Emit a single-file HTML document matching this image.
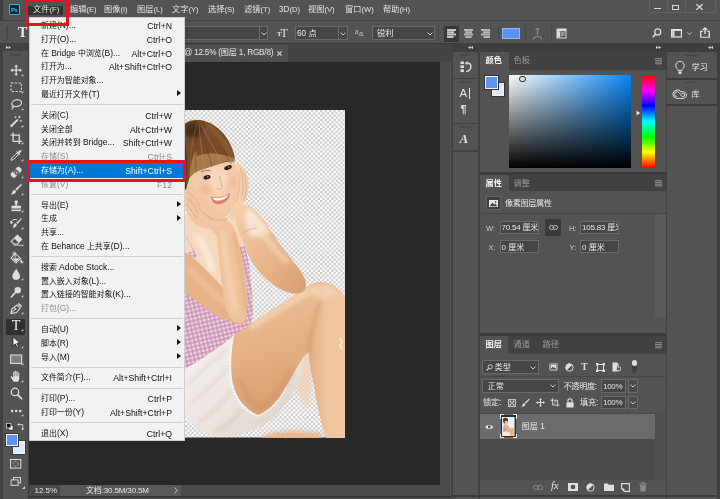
<!DOCTYPE html>
<html lang="zh-CN">
<head>
<meta charset="utf-8">
<title>Photoshop</title>
<style>
html,body{margin:0;padding:0;}
html{background:#535353;}
body{width:720px;height:499px;overflow:hidden;position:relative;background:#535353;will-change:transform;-webkit-font-smoothing:antialiased;
 font-family:"Liberation Sans","Noto Sans CJK SC",sans-serif;font-size:9px;color:#e4e4e4;line-height:1;}
div,span,svg{position:absolute;box-sizing:border-box;}
.t{white-space:nowrap;}
#menubar{left:0;top:0;width:720px;height:20px;background:#535353;}
#menubar .m{top:5.8px;font-size:8.2px;color:#e6e6e6;white-space:nowrap;}
#optbar{left:0;top:20px;width:720px;height:23px;background:#535353;border-top:1px solid #424242;}
.dd{background:#454545;border:1px solid #686868;height:15px;top:5px;}
#toolbar{left:0;top:44px;width:29px;height:455px;background:#535353;border-left:3px solid #404040;border-right:1.5px solid #3c3c3c;}
#toolhead{left:0;top:-1px;width:24.5px;height:8.3px;background:#424242;}
#tabbar{left:29px;top:43px;width:424px;height:19px;background:#444;border-top:1px solid #383838;}
#canvas{left:29px;top:62px;width:411px;height:423px;background:#282828;overflow:hidden;}
#vscroll{left:440px;top:62px;width:10px;height:434px;background:#4a4a4a;}
#hscroll{left:181px;top:485px;width:259px;height:11px;background:#4a4a4a;}
#menu{left:29px;top:17px;width:156px;height:424px;background:#f2f2f2;border:1px solid #cfcfcf;color:#111;font-size:7.95px;}
#menu .i{left:11px;white-space:nowrap;height:12px;line-height:12px;}
#menu .s{right:12px;font-size:8.7px;white-space:nowrap;height:12px;line-height:12px;text-align:right;}
#menu .sep{left:1px;width:152px;height:1px;background:#d0d0d0;}
#menu .dis{color:#8c8c8c;}
#menu .ar{right:3px;width:0;height:0;border-left:4px solid #111;border-top:3px solid transparent;border-bottom:3px solid transparent;}
span.ml{position:static;font-size:7.7px;line-height:1px;}
span.l{position:static;font-size:8.5px;line-height:1px;}
.pt{margin-top:0.7px;font-size:8.2px;white-space:nowrap;color:#e8e8e8;}
.dim{color:#9a9a9a;}
.ic{overflow:visible;}
</style>
</head>
<body>
<div id="menubar">
  <div style="left:0;top:0;width:2.5px;height:499px;background:#3e3e3e;"></div>
  <div style="left:9.3px;top:4.4px;width:10.4px;height:10.2px;background:#0b2837;border:1px solid #2fb9e8;border-radius:1px;"></div>
  <div class="t" style="left:10.9px;top:6.6px;font-size:6px;color:#31c5f4;font-weight:bold;letter-spacing:-0.3px;">Ps</div>
  <div style="left:27px;top:6.2px;width:36.4px;height:9.3px;background:#333;"></div>
  <div class="m" style="left:33px;">文件<span class="ml">(F)</span></div>
  <div class="m" style="left:70px;">编辑<span class="ml">(E)</span></div>
  <div class="m" style="left:104px;">图像<span class="ml">(I)</span></div>
  <div class="m" style="left:137px;">图层<span class="ml">(L)</span></div>
  <div class="m" style="left:172px;">文字<span class="ml">(Y)</span></div>
  <div class="m" style="left:208px;">选择<span class="ml">(S)</span></div>
  <div class="m" style="left:244px;">滤镜<span class="ml">(T)</span></div>
  <div class="m" style="left:279px;">3D<span class="ml">(D)</span></div>
  <div class="m" style="left:308px;">视图<span class="ml">(V)</span></div>
  <div class="m" style="left:345px;">窗口<span class="ml">(W)</span></div>
  <div class="m" style="left:383px;">帮助<span class="ml">(H)</span></div>
  <!-- window controls -->
  <div style="left:648.5px;top:-1px;width:67.5px;height:13.5px;border:1px solid #616161;border-radius:0 0 2px 2px;"></div>
  <div style="left:666.5px;top:0;width:1px;height:12px;background:#616161;"></div>
  <div style="left:684.5px;top:0;width:1px;height:12px;background:#616161;"></div>
  <div style="left:654px;top:7.8px;width:6.5px;height:1.6px;background:#d8d8d8;"></div>
  <div style="left:672px;top:4.8px;width:7px;height:5px;border:1.2px solid #d8d8d8;border-top-width:1.8px;"></div>
  <svg class="ic" style="left:696.3px;top:3.8px;" width="7" height="6" viewBox="0 0 7 6"><path d="M0.4 0.2L6.6 5.8M6.6 0.2L0.4 5.8" stroke="#dcdcdc" stroke-width="1.3" fill="none"/></svg>
</div>
<div id="optbar">
  <!-- T tool indicator -->
  <div class="t" style="left:18px;top:5px;font-family:'Liberation Serif',serif;font-size:14px;font-weight:bold;color:#ececec;">T</div>
  <div style="left:5.8px;top:4.5px;width:1.8px;height:13px;background:#474747;"></div>
  <!-- font family/style dropdown (mostly hidden by menu) -->
  <div class="dd" style="left:60px;width:208px;top:5px;height:13.5px;"></div>
  <div style="left:259px;top:6px;width:1px;height:11.5px;background:#686868;"></div>
  <svg class="ic" style="left:261px;top:11px;" width="6" height="4" viewBox="0 0 6 4"><path d="M0.5 0.5 L3 3 L5.5 0.5" stroke="#d0d0d0" stroke-width="1" fill="none"/></svg>
  <!-- tT icon -->
  <div class="t" style="left:277px;top:9.5px;font-family:'Liberation Serif',serif;font-size:7px;color:#e0e0e0;font-weight:bold;">T</div>
  <div class="t" style="left:280.5px;top:5.5px;font-family:'Liberation Serif',serif;font-size:12px;color:#e0e0e0;">T</div>
  <!-- size dropdown -->
  <div class="dd" style="left:295px;width:53px;top:5px;height:13.5px;"></div>
  <div style="left:338px;top:6px;width:1px;height:11.5px;background:#686868;"></div>
  <div class="t" style="left:297px;top:8.6px;font-size:8.2px;color:#eee;">60 点</div>
  <svg class="ic" style="left:340px;top:11px;" width="6" height="4" viewBox="0 0 6 4"><path d="M0.5 0.5 L3 3 L5.5 0.5" stroke="#d0d0d0" stroke-width="1" fill="none"/></svg>
  <!-- aa icon -->
  <div class="t" style="left:355px;top:7.5px;font-size:6.5px;color:#c8c8c8;">a</div>
  <div class="t" style="left:359px;top:9px;font-size:7.5px;color:#c8c8c8;">a</div>
  <!-- anti-alias dropdown -->
  <div class="dd" style="left:372px;width:63px;top:5px;height:13.5px;"></div>
  <div class="t" style="left:377px;top:8.6px;font-size:8.2px;color:#eee;">锐利</div>
  <svg class="ic" style="left:427px;top:11px;" width="6" height="4" viewBox="0 0 6 4"><path d="M0.5 0.5 L3 3 L5.5 0.5" stroke="#d0d0d0" stroke-width="1" fill="none"/></svg>
  <div style="left:438px;top:5px;width:1px;height:16px;background:#474747;"></div>
  <!-- align buttons -->
  <div style="left:444px;top:4.5px;width:15px;height:16px;background:#383838;"></div>
  <svg class="ic" style="left:446.5px;top:8px;" width="9" height="9" viewBox="0 0 9 9"><path d="M0 0h9v2h-9z M0 2.3h7v2h-7z M0 4.6h9v2h-9z M0 6.9h6.5v2.1h-6.5z" fill="#c4c4c4"/></svg>
  <svg class="ic" style="left:464px;top:8px;" width="9" height="9" viewBox="0 0 9 9"><path d="M0 0h9v2h-9z M1 2.3h7v2h-7z M0 4.6h9v2h-9z M1.3 6.9h6.4v2.1h-6.4z" fill="#b4b4b4"/></svg>
  <svg class="ic" style="left:481px;top:8px;" width="9" height="9" viewBox="0 0 9 9"><path d="M0 0h9v2h-9z M2 2.3h7v2h-7z M0 4.6h9v2h-9z M2.5 6.9h6.5v2.1h-6.5z" fill="#b4b4b4"/></svg>
  <div style="left:498px;top:5px;width:1px;height:16px;background:#474747;"></div>
  <!-- colour swatch -->
  <div style="left:502px;top:6.5px;width:18px;height:11.5px;background:#5a94ef;border:1px solid #8fb6f5;"></div>
  <div style="left:525px;top:5px;width:1px;height:16px;background:#474747;"></div>
  <!-- warp text -->
  <svg class="ic" style="left:532px;top:7px;" width="11" height="12" viewBox="0 0 11 12"><path d="M3.5 1h4M5.5 1v6" stroke="#8c8c8c" stroke-width="1.3" fill="none"/><path d="M0.8 11 Q5.5 5.5 10.2 11" stroke="#8c8c8c" stroke-width="1.2" fill="none"/></svg>
  <div style="left:551px;top:5px;width:1px;height:16px;background:#474747;"></div>
  <!-- panel toggle -->
  <svg class="ic" style="left:556px;top:7px;" width="11" height="11" viewBox="0 0 11 11"><path d="M0.5 0.5h10v10h-10z" fill="#dcdcdc"/><path d="M2 3.2h7.5v6.3h-7.5z" fill="#535353"/><path d="M2 3.2h2.3v6.3h-2.3z M5 4.5h3.5v1h-3.5z M5 6.5h3.5v1h-3.5z" fill="#dcdcdc"/></svg>
  <!-- search -->
  <svg class="ic" style="left:651.5px;top:7px;" width="10" height="10" viewBox="0 0 11 11"><circle cx="6.3" cy="4.3" r="3.3" stroke="#e0e0e0" stroke-width="1.4" fill="none"/><path d="M3.9 6.8L0.8 10" stroke="#e0e0e0" stroke-width="1.7" fill="none"/></svg>
  <!-- workspace -->
  <svg class="ic" style="left:670.5px;top:7.6px;" width="11" height="8.6" viewBox="0 0 13 10" preserveAspectRatio="none"><rect x="0.7" y="0.7" width="11.6" height="8.6" stroke="#e0e0e0" stroke-width="1.4" fill="none"/><rect x="1.5" y="2.2" width="2.6" height="6.5" fill="#e0e0e0"/><rect x="1.5" y="1" width="10" height="1.3" fill="#e0e0e0"/></svg>
  <svg class="ic" style="left:687.4px;top:11px;" width="5" height="3.4" viewBox="0 0 6 4"><path d="M0.5 0.5L3 3L5.5 0.5" stroke="#d0d0d0" stroke-width="1.1" fill="none"/></svg>
  <!-- share -->
  <svg class="ic" style="left:700px;top:6px;" width="10" height="11" viewBox="0 0 11 14" preserveAspectRatio="none"><path d="M3 5.5H0.8V13h9.4V5.5H8" stroke="#e0e0e0" stroke-width="1.5" fill="none"/><path d="M5.5 9V1.2M3 3.8L5.5 1.2L8 3.8" stroke="#e0e0e0" stroke-width="1.5" fill="none"/></svg>
</div>
<!-- dark band under options bar -->
<div style="left:0;top:43px;width:720px;height:9px;background:#3e3e3e;"></div>
<div id="tabbar">
  <div style="left:0;top:0.5px;width:259px;height:17.5px;background:#505050;"></div>
  <div class="t" style="left:155px;top:5px;font-size:8.2px;letter-spacing:-0.22px;color:#e6e6e6;">@ 12.5% (图层 1, RGB/8)</div>
  <svg class="ic" style="left:247.5px;top:7px;" width="5" height="5" viewBox="0 0 5 5"><path d="M0.3 0.3L4.7 4.7M4.7 0.3L0.3 4.7" stroke="#d8d8d8" stroke-width="1.1"/></svg>
</div>
<div id="toolbar">
<div id="toolhead"></div>
<svg class="ic" style="left:3px;top:2.2px;" width="5" height="3" viewBox="0 0 5 3"><path d="M0 0V3L2.4 1.5ZM2.6 0V3L5 1.5Z" fill="#e0e0e0"/></svg>
<div style="left:6.5px;top:10px;width:12px;height:1.6px;background:#494949;"></div>
<div style="left:2.8px;top:275px;width:19.5px;height:15.5px;background:#2f2f2f;border-radius:1px;"></div>
<svg class="ic" style="left:6.5px;top:20.4px;" width="12.4" height="12.4" viewBox="0 0 14 14"><path d="M7 0.5L9.2 3H7.7V6.3H11V4.8L13.5 7L11 9.2V7.7H7.7V11H9.2L7 13.5L4.8 11H6.3V7.7H3V9.2L0.5 7L3 4.8V6.3H6.3V3H4.8Z" fill="#dedede"/></svg>
<svg class="ic" style="left:17.8px;top:30.2px;" width="2.3" height="2.3" viewBox="0 0 3 3"><path d="M3 0V3H0Z" fill="#cfcfcf"/></svg>
<svg class="ic" style="left:6.5px;top:37.4px;" width="12.4" height="12.4" viewBox="0 0 14 14"><rect x="1.2" y="2.2" width="11.6" height="9.6" fill="none" stroke="#dedede" stroke-width="1.2" stroke-dasharray="2.6 1.6"/></svg>
<svg class="ic" style="left:17.8px;top:47.2px;" width="2.3" height="2.3" viewBox="0 0 3 3"><path d="M3 0V3H0Z" fill="#cfcfcf"/></svg>
<svg class="ic" style="left:6.5px;top:54.4px;" width="12.4" height="12.4" viewBox="0 0 14 14"><ellipse cx="7.5" cy="5.8" rx="5.6" ry="3.8" fill="none" stroke="#dedede" stroke-width="1.3" transform="rotate(-12 7.5 5.8)"/><path d="M3.2 8.6C1.8 9.6 2.2 11.2 3.6 11C4.8 10.8 4.4 9.2 3.4 9.4M3.4 11C3 12 2.4 12.8 1.6 13.4" fill="none" stroke="#dedede" stroke-width="1.1"/></svg>
<svg class="ic" style="left:17.8px;top:64.2px;" width="2.3" height="2.3" viewBox="0 0 3 3"><path d="M3 0V3H0Z" fill="#cfcfcf"/></svg>
<svg class="ic" style="left:6.5px;top:71.4px;" width="12.4" height="12.4" viewBox="0 0 14 14"><path d="M1.5 12.5L8.2 5.8" stroke="#dedede" stroke-width="2.2" stroke-linecap="round"/><path d="M10.5 0.8v3M9 2.3h3M12.3 5.5v2.4M11.1 6.7h2.4M6.2 1.6v2M5.2 2.6h2" stroke="#dedede" stroke-width="0.9"/></svg>
<svg class="ic" style="left:17.8px;top:81.2px;" width="2.3" height="2.3" viewBox="0 0 3 3"><path d="M3 0V3H0Z" fill="#cfcfcf"/></svg>
<svg class="ic" style="left:6.5px;top:88.4px;" width="12.4" height="12.4" viewBox="0 0 14 14"><path d="M3.5 0.5V10.5H13.5M0.5 3.5H10.5V13.5" fill="none" stroke="#dedede" stroke-width="1.5"/></svg>
<svg class="ic" style="left:17.8px;top:98.2px;" width="2.3" height="2.3" viewBox="0 0 3 3"><path d="M3 0V3H0Z" fill="#cfcfcf"/></svg>
<svg class="ic" style="left:6.5px;top:105.4px;" width="12.4" height="12.4" viewBox="0 0 14 14"><path d="M1.2 12.8L2 10.2L7.4 4.8L9.2 6.6L3.8 12Z" fill="none" stroke="#dedede" stroke-width="1.1"/><path d="M7 3.4L10.6 7L11.6 6L10.6 5L12.6 3C13.4 2.2 12.8 0.6 11.4 1.2L9 3.4L8 2.4Z" fill="#dedede"/></svg>
<svg class="ic" style="left:17.8px;top:115.2px;" width="2.3" height="2.3" viewBox="0 0 3 3"><path d="M3 0V3H0Z" fill="#cfcfcf"/></svg>
<svg class="ic" style="left:6.5px;top:122.4px;" width="12.4" height="12.4" viewBox="0 0 14 14"><g transform="rotate(-45 7 7)"><rect x="0" y="3.6" width="14" height="6.8" rx="3.2" fill="#dedede"/><rect x="4.6" y="3.6" width="4.8" height="6.8" fill="#535353"/><circle cx="6" cy="5.6" r="0.6" fill="#dedede"/><circle cx="8" cy="5.6" r="0.6" fill="#dedede"/><circle cx="6" cy="8.4" r="0.6" fill="#dedede"/><circle cx="8" cy="8.4" r="0.6" fill="#dedede"/><circle cx="7" cy="7" r="0.6" fill="#dedede"/></g></svg>
<svg class="ic" style="left:17.8px;top:132.2px;" width="2.3" height="2.3" viewBox="0 0 3 3"><path d="M3 0V3H0Z" fill="#cfcfcf"/></svg>
<svg class="ic" style="left:6.5px;top:139.4px;" width="12.4" height="12.4" viewBox="0 0 14 14"><path d="M12.8 0.8C13.6 1.2 13.4 2 12.8 2.8L7.6 8.6L5.8 7Z" fill="#dedede"/><path d="M5 7.8L6.8 9.4C6.6 11.6 4.6 13.2 1 12.8C2.6 11.8 2.6 10.6 3 9.4C3.4 8.4 4.2 7.8 5 7.8Z" fill="#dedede"/></svg>
<svg class="ic" style="left:17.8px;top:149.2px;" width="2.3" height="2.3" viewBox="0 0 3 3"><path d="M3 0V3H0Z" fill="#cfcfcf"/></svg>
<svg class="ic" style="left:6.5px;top:156.4px;" width="12.4" height="12.4" viewBox="0 0 14 14"><path d="M5 1.6C5 0.2 9 0.2 9 1.6C9 3 8 3.8 8 5.2V6.6H12.4V9.6H1.6V6.6H6V5.2C6 3.8 5 3 5 1.6Z" fill="#dedede"/><rect x="1.6" y="10.8" width="10.8" height="1.8" fill="#dedede"/></svg>
<svg class="ic" style="left:17.8px;top:166.2px;" width="2.3" height="2.3" viewBox="0 0 3 3"><path d="M3 0V3H0Z" fill="#cfcfcf"/></svg>
<svg class="ic" style="left:6.5px;top:173.4px;" width="12.4" height="12.4" viewBox="0 0 14 14"><path d="M13 1C13.6 1.4 13.4 2.2 12.8 2.8L8.6 7.8L7 6.4Z" fill="#dedede"/><path d="M6.2 7.2L7.8 8.6C7.6 10.6 5.8 12.4 2.4 12.2C3.8 11.2 3.8 10.2 4.2 9C4.6 8 5.4 7.2 6.2 7.2Z" fill="#dedede"/><path d="M1 7.4A4.6 4.6 0 0 1 8 3.4" fill="none" stroke="#dedede" stroke-width="1.1"/><path d="M0 4.2L1 7.8L4 6.2Z" fill="#dedede"/></svg>
<svg class="ic" style="left:17.8px;top:183.2px;" width="2.3" height="2.3" viewBox="0 0 3 3"><path d="M3 0V3H0Z" fill="#cfcfcf"/></svg>
<svg class="ic" style="left:6.5px;top:190.4px;" width="12.4" height="12.4" viewBox="0 0 14 14"><path d="M8.2 1.4L13.2 6L8.4 11.2H4.4L1.4 8.4Z" fill="none" stroke="#dedede" stroke-width="1.2"/><path d="M8.2 1.4L13.2 6L9.8 9.6L4.8 5Z" fill="#dedede"/><path d="M4 12.6H13" stroke="#dedede" stroke-width="1"/></svg>
<svg class="ic" style="left:17.8px;top:200.2px;" width="2.3" height="2.3" viewBox="0 0 3 3"><path d="M3 0V3H0Z" fill="#cfcfcf"/></svg>
<svg class="ic" style="left:6.5px;top:207.4px;" width="12.4" height="12.4" viewBox="0 0 14 14"><g transform="translate(0,1)"><path d="M5.8 1.6L12 7.4L6.8 12.6L1.2 7.2Z" fill="none" stroke="#dedede" stroke-width="1.2"/><path d="M2.6 7.2H10.8L6.8 11.4Z" fill="#dedede"/><path d="M5.8 6.4V1C5.8 -0.4 3.6 -0.4 3.6 1.4V4" fill="none" stroke="#dedede" stroke-width="1"/><path d="M12.6 8.4C13.6 10 14 10.8 13.6 11.8C13.2 12.8 11.8 12.6 11.6 11.6C11.4 10.6 12 9.6 12.6 8.4Z" fill="#dedede"/></g></svg>
<svg class="ic" style="left:17.8px;top:217.2px;" width="2.3" height="2.3" viewBox="0 0 3 3"><path d="M3 0V3H0Z" fill="#cfcfcf"/></svg>
<svg class="ic" style="left:6.5px;top:224.4px;" width="12.4" height="12.4" viewBox="0 0 14 14"><path d="M7 0.8C9 4 11.4 6.6 11.4 9.2C11.4 11.8 9.4 13.4 7 13.4C4.6 13.4 2.6 11.8 2.6 9.2C2.6 6.6 5 4 7 0.8Z" fill="#dedede"/></svg>
<svg class="ic" style="left:17.8px;top:234.2px;" width="2.3" height="2.3" viewBox="0 0 3 3"><path d="M3 0V3H0Z" fill="#cfcfcf"/></svg>
<svg class="ic" style="left:6.5px;top:241.4px;" width="12.4" height="12.4" viewBox="0 0 14 14"><g transform="translate(0,1)"><circle cx="8.8" cy="4.8" r="3.6" fill="#dedede"/><path d="M6 7.6L1.4 12.6" stroke="#dedede" stroke-width="1.8" stroke-linecap="round"/></g></svg>
<svg class="ic" style="left:17.8px;top:251.2px;" width="2.3" height="2.3" viewBox="0 0 3 3"><path d="M3 0V3H0Z" fill="#cfcfcf"/></svg>
<svg class="ic" style="left:6.5px;top:258.4px;" width="12.4" height="12.4" viewBox="0 0 14 14"><path d="M1 13L2.4 7.6L8 3.4L11.6 7L7 12Z" fill="none" stroke="#dedede" stroke-width="1.2" stroke-linejoin="round"/><path d="M1.2 12.8L5.6 8.4" stroke="#dedede" stroke-width="1"/><circle cx="6" cy="8" r="1.1" fill="#dedede"/><path d="M8.6 2.4L10 1L13.6 4.6L12.4 6Z" fill="#dedede"/></svg>
<svg class="ic" style="left:17.8px;top:268.2px;" width="2.3" height="2.3" viewBox="0 0 3 3"><path d="M3 0V3H0Z" fill="#cfcfcf"/></svg>
<svg class="ic" style="left:6.5px;top:275.4px;" width="12.4" height="12.4" viewBox="0 0 14 14"><text x="7" y="12.6" text-anchor="middle" font-family="Liberation Serif,serif" font-size="16" fill="#f4f4f4">T</text></svg>
<svg class="ic" style="left:17.8px;top:285.2px;" width="2.3" height="2.3" viewBox="0 0 3 3"><path d="M3 0V3H0Z" fill="#cfcfcf"/></svg>
<svg class="ic" style="left:6.5px;top:292.4px;" width="12.4" height="12.4" viewBox="0 0 14 14"><path d="M3.4 0.8V11.4L6 8.8L7.8 13L9.6 12.2L7.8 8.2H11.4Z" fill="#f4f4f4" stroke="#1e1e1e" stroke-width="0.9" stroke-linejoin="round"/></svg>
<svg class="ic" style="left:17.8px;top:302.2px;" width="2.3" height="2.3" viewBox="0 0 3 3"><path d="M3 0V3H0Z" fill="#cfcfcf"/></svg>
<svg class="ic" style="left:6.5px;top:309.4px;" width="12.4" height="12.4" viewBox="0 0 14 14"><rect x="0.8" y="2.2" width="12.4" height="9.6" fill="#7d7d7d" stroke="#dedede" stroke-width="1.2"/></svg>
<svg class="ic" style="left:17.8px;top:319.2px;" width="2.3" height="2.3" viewBox="0 0 3 3"><path d="M3 0V3H0Z" fill="#cfcfcf"/></svg>
<svg class="ic" style="left:6.5px;top:326.4px;" width="12.4" height="12.4" viewBox="0 0 14 14"><path d="M4.2 13.4C3.4 11.6 1.6 9.8 0.8 8.2C0.4 7.2 1.6 6.6 2.4 7.4L3.6 8.8V2.8C3.6 1.8 5 1.8 5.2 2.8V1.6C5.4 0.6 6.8 0.6 7 1.6V2.2C7.2 1.2 8.6 1.2 8.8 2.2V3.4C9 2.4 10.4 2.6 10.4 3.6V9.6C10.4 11.2 9.8 12.2 9.2 13.4Z" fill="#dedede"/><path d="M5.2 3V7M7 2.4V7M8.8 3V7" stroke="#535353" stroke-width="0.6"/></svg>
<svg class="ic" style="left:17.8px;top:336.2px;" width="2.3" height="2.3" viewBox="0 0 3 3"><path d="M3 0V3H0Z" fill="#cfcfcf"/></svg>
<svg class="ic" style="left:6.5px;top:343.4px;" width="12.4" height="12.4" viewBox="0 0 14 14"><circle cx="5.6" cy="5.6" r="4.2" fill="none" stroke="#dedede" stroke-width="1.4"/><path d="M8.8 8.8L13 13" stroke="#dedede" stroke-width="2" stroke-linecap="round"/></svg>
<svg class="ic" style="left:6.5px;top:360.4px;" width="12.4" height="12.4" viewBox="0 0 14 14"><circle cx="2.4" cy="8" r="1.5" fill="#dedede"/><circle cx="7" cy="8" r="1.5" fill="#dedede"/><circle cx="11.6" cy="8" r="1.5" fill="#dedede"/></svg>
<svg class="ic" style="left:17.8px;top:370.2px;" width="2.3" height="2.3" viewBox="0 0 3 3"><path d="M3 0V3H0Z" fill="#cfcfcf"/></svg>
<svg class="ic" style="left:3px;top:378.8px;" width="7.4" height="7.4" viewBox="0 0 9 9"><rect x="3" y="3" width="5.5" height="5.5" fill="#f0f0f0" stroke="#222" stroke-width="0.6"/><rect x="0.5" y="0.5" width="5.5" height="5.5" fill="#111" stroke="#eee" stroke-width="0.8"/></svg>
<svg class="ic" style="left:13.8px;top:378.6px;" width="7.8" height="7.8" viewBox="0 0 9 9"><path d="M2 1.8H6.6V7" fill="none" stroke="#dedede" stroke-width="1"/><path d="M0.2 1.8L2.6 0V3.6Z M6.6 8.8L4.8 6.4H8.4Z" fill="#dedede"/></svg>
<div style="left:9.5px;top:397px;width:12.5px;height:12.5px;background:#dce9f8;border:1px solid #f4f4f4;outline:0.5px solid #3a3a3a;"></div>
<div style="left:2.8px;top:389.5px;width:12.7px;height:12.7px;background:#5b95f0;border:1px solid #f4f4f4;outline:0.6px solid #3a3a3a;"></div>
<svg class="ic" style="left:7.2px;top:414.6px;" width="11.4" height="9.6" viewBox="0 0 13 11"><rect x="0.6" y="0.6" width="11.8" height="9.8" fill="none" stroke="#dedede" stroke-width="1.2"/><circle cx="6.5" cy="5.5" r="2.8" fill="none" stroke="#dedede" stroke-width="0.9" stroke-dasharray="1.2 0.8"/></svg>
<svg class="ic" style="left:6.8px;top:432.8px;" width="11.6" height="9.6" viewBox="0 0 13 12"><rect x="3.6" y="0.6" width="8.8" height="6.8" fill="#535353" stroke="#dedede" stroke-width="1.2"/><rect x="0.6" y="3.6" width="8.8" height="6.8" fill="#535353" stroke="#dedede" stroke-width="1.2"/></svg>
<svg class="ic" style="left:19px;top:442px;" width="3" height="3" viewBox="0 0 3 3"><path d="M3 0V3H0Z" fill="#cfcfcf"/></svg>
</div>
<div id="canvas">
<svg style="left:156px;top:48px;" width="160" height="327.5" viewBox="185 110 160 327.5" preserveAspectRatio="none">
<defs>
  <pattern id="chk" x="185" y="110" width="4.5" height="4.5" patternUnits="userSpaceOnUse"><rect width="4.5" height="4.5" fill="#ffffff"/><rect width="2.25" height="2.25" fill="#cccccc"/><rect x="2.25" y="2.25" width="2.25" height="2.25" fill="#cccccc"/></pattern>
  <pattern id="ging" width="4.2" height="4.2" patternUnits="userSpaceOnUse" patternTransform="rotate(-14)"><rect width="4.2" height="4.2" fill="#f4e4ec"/><rect width="2.1" height="4.2" fill="#d395b8" opacity="0.7"/><rect width="4.2" height="2.1" fill="#c47aa6" opacity="0.55"/></pattern>
  <linearGradient id="skinA" x1="0" y1="0" x2="1" y2="1"><stop offset="0" stop-color="#f4cfae"/><stop offset="0.6" stop-color="#e7b287"/><stop offset="1" stop-color="#d79d70"/></linearGradient>
  <linearGradient id="thigh" x1="0.3" y1="0" x2="0.5" y2="1"><stop offset="0" stop-color="#edc098"/><stop offset="0.5" stop-color="#e2ad80"/><stop offset="1" stop-color="#d2976a"/></linearGradient>
  <linearGradient id="shin" x1="0" y1="0" x2="1" y2="0"><stop offset="0" stop-color="#e3ae83"/><stop offset="0.5" stop-color="#eec49d"/><stop offset="1" stop-color="#f1c9a3"/></linearGradient>
  <linearGradient id="hair" x1="0" y1="0" x2="1" y2="1"><stop offset="0" stop-color="#6b3d1c"/><stop offset="0.5" stop-color="#8a5830"/><stop offset="1" stop-color="#6a3c1d"/></linearGradient>
  <linearGradient id="shorts" x1="0" y1="0" x2="1" y2="1"><stop offset="0" stop-color="#f6f2f0"/><stop offset="0.5" stop-color="#ece5e1"/><stop offset="1" stop-color="#d9cec8"/></linearGradient>
  <filter id="b1" x="-10%" y="-10%" width="120%" height="120%"><feGaussianBlur stdDeviation="0.6"/></filter>
  <filter id="b2" x="-20%" y="-20%" width="140%" height="140%"><feGaussianBlur stdDeviation="2"/></filter>
  <clipPath id="imgclip"><rect x="185" y="110" width="160" height="327.5"/></clipPath>
</defs>
<rect x="185" y="110" width="160" height="327.5" fill="url(#chk)"/>
<g clip-path="url(#imgclip)" filter="url(#b1)">
<!-- far leg glimpses (blurred) -->
<g filter="url(#b2)">
<path d="M297 358C303 352 312 350 312 360C312 380 311 395 308 408C302 408 297 392 296 378Z" fill="#f0d3bd" opacity="0.85"/>
<path d="M262 437C270 431 290 429 322 433L322 440H262Z" fill="#e8b58f"/>
</g>
<!-- neck and chest -->
<path d="M185 214C195 222 215 228 236 216L246 252C240 275 225 292 205 296L185 292Z" fill="#f6d8bf"/>
<path d="M196 236C204 244 210 258 212 272" stroke="#fdeee2" stroke-width="6" fill="none" opacity="0.8" filter="url(#b2)"/>
<!-- top (pink gingham) -->
<path d="M244 246C248 254 251 275 252.500 300C253.500 315 252 326 250 329L236 338L185 376L185 290C200 300 222 312 236 320C232 300 228 270 234 248Z" fill="url(#ging)"/>
<path d="M244 246C248 254 251 275 252.500 300C253.500 315 252 326 250 329L236 338L185 376L185 290C200 300 222 312 236 320C232 300 228 270 234 248Z" fill="#b98aa8" opacity="0.12"/>
<!-- strap -->
<path d="M186 236L194.500 252" stroke="#d9b3d2" stroke-width="1" fill="none"/><path d="M185 254L194 251L198 257L185 263Z" fill="url(#ging)"/>
<!-- shorts -->
<path d="M185 369C200 360 222 346 234 335C231 352 230 370 233 384C236 398 246 410 258 415C266 412 277 404 285 389C290 378 295 368 298 362L304 356C302 372 296 392 286 404C276 418 262 428 250 431C238 437 214 439 200 430C194 426 188 420 185 416Z" fill="url(#shorts)"/>
<path d="M188 384C198 374 212 362 226 350M190 404C202 394 216 382 228 368M198 422C210 416 222 404 232 390M214 432C224 428 234 420 242 410" stroke="#b9aaa3" stroke-width="1.600" fill="none" opacity="0.6" filter="url(#b2)"/>
<path d="M234 336C230 352 229 372 232 386C236 400 246 412 258 416C268 412 278 403 286 388" stroke="#fbf8f6" stroke-width="2.400" fill="none" stroke-dasharray="2.200 1.200"/>
<!-- thigh + knee + shin -->
<path d="M234 335C250 324 272 310 296 294C304 288 312 282 320 282C332 282 341 289 345 297L345 438L326 438C321 422 317 404 314 384C311 372 309 362 309 352C306 354 305 355 304 356C296 368 290 380 284 390C276 404 266 412 258 415C246 410 236 398 233 384C230 370 231 352 234 335Z" fill="url(#thigh)"/>
<path d="M320 284C332 283 341 289 345 297L345 438L326 438C321 422 317 404 314 384C311 372 309 362 309 352C310 340 314 320 320 304Z" fill="url(#shin)"/>
<path d="M320 302C314 320 310 338 309 354" stroke="#c58a5e" stroke-width="2.500" fill="none" opacity="0.55" filter="url(#b2)"/>
<path d="M250 328C270 314 292 300 316 288" stroke="#f8dcc2" stroke-width="7" fill="none" opacity="0.65" filter="url(#b2)"/>
<path d="M240 380C246 396 254 406 262 408C272 402 282 388 292 370" stroke="#cd8f62" stroke-width="6" fill="none" opacity="0.45" filter="url(#b2)"/>
<!-- knee highlight -->
<ellipse cx="324" cy="292" rx="13" ry="7" fill="#f6d6b8" opacity="0.7" filter="url(#b2)"/>
<path d="M340 338L342 342L340 346L342 349" stroke="#fff" stroke-width="1.500" fill="none" opacity="0.7"/>
<!-- right forearm (viewer right) -->
<path d="M236 214C239 206 246 203 252 207C260 213 268 226 277 240C288 256 299 267 304 277C308 285 306 292 298 293.500C288 295 274 287 262 275C253 266 247 254 244 244C240 234 234 224 236 214Z" fill="url(#skinA)"/>
<path d="M246 208C254 210 262 220 270 232C264 236 256 238 250 236C246 228 244 218 246 208Z" fill="#fbe9da" opacity="0.9" filter="url(#b2)"/>
<path d="M254 222C264 236 274 250 288 262" stroke="#f8dcc2" stroke-width="5" fill="none" opacity="0.7" filter="url(#b2)"/>
<path d="M243 233C248 230 253 228 257 228" stroke="#cf9468" stroke-width="0.7" fill="none" opacity="0.8"/>
<!-- left upper arm -->
<path d="M185 253C192 256 200 264 208 272C214 278 220 284 226 292L246 318C246 324 240 326 232 322C218 318 200 304 185 292Z" fill="#e6b186"/>
<path d="M188 268C198 278 212 292 226 304" stroke="#f0c6a0" stroke-width="6" fill="none" opacity="0.7" filter="url(#b2)"/>
<!-- left forearm -->
<path d="M205 222C212 218 228 218 233 226C238 238 243 258 246 280C248 296 248.500 312 244 321C238 326 230 322 226 308C222 290 219 262 217 236Z" fill="#efc39c"/>
<path d="M222 232C225 252 229 284 236 312" stroke="#f8d9bd" stroke-width="5" fill="none" opacity="0.75" filter="url(#b2)"/>
<path d="M234 232C239 254 244 284 246 312" stroke="#cf9669" stroke-width="2.500" fill="none" opacity="0.6" filter="url(#b2)"/>
<!-- face -->
<path d="M188 176C196 164 222 156 234 160C240 170 243 186 239 200C235 212 226 219 216 219C204 218 192 206 188 192Z" fill="#f3caa8"/>
<path d="M206 170C214 166 224 166 228 172C228 182 226 190 220 196C214 192 208 182 206 170Z" fill="#f9dcc4" opacity="0.8" filter="url(#b2)"/>
<!-- cheek blush -->
<ellipse cx="205" cy="190" rx="6" ry="4.5" fill="#eeaa90" opacity="0.55" filter="url(#b2)"/>
<ellipse cx="234" cy="182" rx="4" ry="5" fill="#eeaa90" opacity="0.5" filter="url(#b2)"/>
<!-- nose shadow -->
<path d="M219 176C221 182 223 186 221 189C219 190 217 189 216 188" stroke="#d89c78" stroke-width="1" fill="none" opacity="0.7"/>
<!-- right hand (viewer right) -->
<path d="M234.5 164C239 163 244 168 247 175C250 183 249 192 246 199C243 207 239 213 234 219C229 221 228 216 231 210C235 204 238 196 238 188C238 178 236 170 234.5 164Z" fill="#f4cfae"/>
<path d="M238 172C240 180 240 192 236 202" stroke="#dca27c" stroke-width="0.8" fill="none" opacity="0.7"/>
<!-- left hand -->
<path d="M186 187C190 184 197 189 201 195C207 204 216 213 228 218C226 226 214 230 204 228C195 226 188 218 186 210C185 202 185 194 186 187Z" fill="#f2c6a3"/>
<path d="M189 198C195 204 203 214 212 220" stroke="#d99c76" stroke-width="0.8" fill="none" opacity="0.7"/>
<g fill="none" stroke="#d39a74" stroke-width="0.7" opacity="0.8" stroke-linecap="round">
<path d="M240 168C243 176 244 186 242 196"/><path d="M243.500 172C247 180 247 190 244 200"/>
<path d="M187.500 192C192 194 197 200 200 206"/><path d="M186.500 198C191 201 195 207 198 213"/><path d="M187 205C191 209 194 214 197 219"/>
<path d="M205 214C212 220 220 222 228 219"/>
</g>
<!-- hair -->
<path d="M185 123.500C189 120.500 195 119.500 199 120C206 120.500 213 124 219 129C226 135 231 144 234 154C235 158 234.600 160 234 162C229 161 224 162 219 164C213 166 205 168 198 171C194 173 191 175 189.500 178C188 182 187 186 186 190L185 190Z" fill="#774b28"/>
<ellipse cx="193" cy="130" rx="9" ry="8" fill="#3a2618" opacity="0.8" filter="url(#b2)"/>
<path d="M185 140C187 150 187 170 186 188L185 188Z" fill="#4a2e1a" opacity="0.8" filter="url(#b1)"/>
<!-- bangs (lighter) -->
<path d="M197 156C207 152 222 153 233 158C234.500 159 234.600 160 234 162C229 161 224 162 219 164C213 166 205 168 198 171C194 173 191 175 189.500 178C190 168 192 158 196 150Z" fill="#b88a5a" opacity="0.75" filter="url(#b1)"/>
<path d="M206 126C216 132 226 144 231 158" stroke="#a87a4a" stroke-width="3" fill="none" opacity="0.6" filter="url(#b2)"/>
<g fill="none" stroke-linecap="round" opacity="0.55">
<path d="M200 123C206 134 214 148 222 163" stroke="#c09466" stroke-width="0.8"/>
<path d="M200 124C204 138 208 152 212 166" stroke="#5b381e" stroke-width="0.8"/>
<path d="M199 124C200 140 202 154 204 168" stroke="#bd9060" stroke-width="0.8"/>
<path d="M198 124C196 140 195 156 196 171" stroke="#5b381e" stroke-width="0.8"/>
<path d="M197 124C192 138 190 156 190 176" stroke="#ab7e52" stroke-width="0.8"/>
<path d="M202 123C212 130 222 144 229 161" stroke="#5b381e" stroke-width="0.8"/>
<path d="M206 123C218 130 228 142 233 158" stroke="#9a6c42" stroke-width="0.9"/>
</g>
<!-- eyebrows -->
<path d="M201 172C204 170 208 170 211 171" stroke="#8a5a36" stroke-width="0.9" fill="none" opacity="0.8"/>
<path d="M222 163C225 161 229 161 232 163" stroke="#8a5a36" stroke-width="0.9" fill="none" opacity="0.8"/>
<!-- eyes -->
<ellipse cx="207" cy="177.300" rx="3.600" ry="2" fill="#2e1c12" transform="rotate(-14 207 177.3)"/>
<ellipse cx="228" cy="167.600" rx="4" ry="2.100" fill="#2e1c12" transform="rotate(-22 228 167.6)"/>
<circle cx="207.800" cy="176.800" r="0.600" fill="#fff"/><circle cx="228.800" cy="167" r="0.600" fill="#fff"/>
<!-- mouth -->
<path d="M211 196.500C217 198.500 225 197 230 193C230 200 223 205.500 216 204C213 203 211.500 200 211 196.500Z" fill="#dc7a70"/>
<path d="M212.600 197.400C218 199 224.500 197.600 228.600 194.600C227 199.500 219 202 214 200Z" fill="#fdf6f1"/>

</g>
</svg>
</div>
<div id="vscroll"></div>
<div id="hscroll"></div>
<!-- status bar -->
<div style="left:29px;top:485px;width:31px;height:11px;background:#4a4a4a;"></div>
<div style="left:60px;top:485px;width:121px;height:11px;background:#595959;"></div>
<div class="t" style="left:34.5px;top:486.5px;font-size:8px;color:#e8e8e8;">12.5%</div>
<div class="t" style="left:86px;top:486.5px;font-size:8px;letter-spacing:-0.15px;color:#e8e8e8;">文档:30.5M/30.5M</div>
<svg class="ic" style="left:174px;top:487px;" width="4" height="7" viewBox="0 0 4 7"><path d="M0.5 0.5L3.3 3.5L0.5 6.5" stroke="#cfcfcf" stroke-width="0.9" fill="none"/></svg>
<div style="left:29px;top:496px;width:423px;height:1.5px;background:#383838;"></div>
<div style="left:450.8px;top:62px;width:2.2px;height:437px;background:#414141;"></div>
<!-- ICON STRIP -->
<div style="left:453px;top:52px;width:24px;height:447px;background:#535353;"></div>
<svg class="ic" style="left:468.3px;top:46.2px;" width="5" height="3" viewBox="0 0 5 3"><path d="M2.4 0V3L0 1.5ZM5 0V3L2.6 1.5Z" fill="#e0e0e0"/></svg>
<div style="left:458.5px;top:54.2px;width:12.5px;height:1.6px;background:#494949;"></div>
<div style="left:452.5px;top:77.5px;width:25.5px;height:1.8px;background:#414141;"></div>
<div style="left:458.5px;top:81.2px;width:12.5px;height:1.6px;background:#494949;"></div>
<div style="left:452.5px;top:122.5px;width:25.5px;height:1.8px;background:#414141;"></div>
<div style="left:458.5px;top:126.2px;width:12.5px;height:1.6px;background:#494949;"></div>
<div style="left:452.5px;top:150px;width:25.5px;height:1.8px;background:#414141;"></div>
<!-- history icon -->
<svg class="ic" style="left:460px;top:61px;" width="12" height="12" viewBox="0 0 12 12"><rect x="0.5" y="0.5" width="3.4" height="2.6" fill="#dedede"/><rect x="0.5" y="4.4" width="3.4" height="2.6" fill="#dedede"/><rect x="0.5" y="8.3" width="3.4" height="2.8" fill="#dedede"/><path d="M6 2.2C9.6 1.4 11.4 3.6 10.8 6.4C10.4 8.6 8.6 10.2 6.2 10.6" fill="none" stroke="#dedede" stroke-width="1.4"/><path d="M4.8 2.2L7.4 0.2V4.2Z" fill="#dedede"/></svg>
<!-- A| -->
<div class="t" style="left:459.5px;top:88px;font-size:11.5px;color:#e4e4e4;">A</div>
<div style="left:468.6px;top:88px;width:1px;height:11px;background:#e4e4e4;"></div>
<!-- pilcrow -->
<div class="t" style="left:460.5px;top:104px;font-size:11px;font-weight:bold;color:#e4e4e4;">¶</div>
<!-- glyphs A -->
<div class="t" style="left:459.5px;top:131.5px;font-family:'Liberation Serif',serif;font-style:italic;font-weight:bold;font-size:13px;color:#e4e4e4;">A</div>

<!-- MAIN PANELS column -->
<div style="left:478px;top:43px;width:1.5px;height:456px;background:#414141;"></div>
<div style="left:665.5px;top:52px;width:1.7px;height:447px;background:#414141;"></div>
<svg class="ic" style="left:656.3px;top:46.2px;" width="5" height="3" viewBox="0 0 5 3"><path d="M0 0V3L2.4 1.5ZM2.6 0V3L5 1.5Z" fill="#e0e0e0"/></svg>
<!-- Colour panel -->
<div style="left:479.5px;top:52px;width:186px;height:17.5px;background:#424242;"></div>
<div style="left:479.5px;top:52px;width:29px;height:17.5px;background:#535353;"></div>
<div class="pt" style="left:485.5px;top:56.5px;font-weight:bold;color:#f4f4f4;">颜色</div>
<div class="pt dim" style="left:513.5px;top:56.5px;">色板</div>
<svg class="ic" style="left:655px;top:58px;" width="7" height="6" viewBox="0 0 7 6"><path d="M0 0.6H7M0 2.4H7M0 4.2H7M0 5.8H7" stroke="#a2a2a2" stroke-width="0.8"/></svg>
<!-- fg/bg -->
<div style="left:491.8px;top:83.2px;width:12.5px;height:12.5px;background:#dce9f8;border:1px solid #f4f4f4;outline:0.5px solid #333;"></div>
<div style="left:485.2px;top:76.4px;width:12.5px;height:12.5px;background:#5b95f0;border:1px solid #f4f4f4;outline:0.6px solid #333;"></div>
<!-- colour field -->
<div style="left:508.5px;top:74.5px;width:122.5px;height:93px;background:linear-gradient(to bottom,rgba(0,0,0,0),#000),linear-gradient(to right,#fff,#0887f6);"></div>
<div style="left:519px;top:75.5px;width:6.5px;height:6.5px;border:1px solid #222;border-radius:50%;box-shadow:inset 0 0 0 0.6px #eee;"></div>
<!-- hue strip -->
<div style="left:642px;top:74.5px;width:12.5px;height:93px;background:linear-gradient(to bottom,#ff0000 0%,#ff00ff 17%,#0000ff 33%,#00ffff 50%,#00ff00 67%,#ffff00 83%,#ff0000 100%);"></div>
<svg class="ic" style="left:636px;top:110px;" width="5" height="6" viewBox="0 0 5 6"><path d="M0.3 0.3L4.6 3L0.3 5.7Z" fill="#f2f2f2" stroke="#333" stroke-width="0.4"/></svg>
<!-- divider -->
<div style="left:479.5px;top:172px;width:186px;height:3px;background:#3a3a3a;"></div>
<!-- Properties panel -->
<div style="left:479.5px;top:175px;width:186px;height:16px;background:#424242;"></div>
<div style="left:479.5px;top:175px;width:29px;height:16px;background:#535353;"></div>
<div class="pt" style="left:485.5px;top:179px;font-weight:bold;color:#f4f4f4;">属性</div>
<div class="pt dim" style="left:513.5px;top:179px;">调整</div>
<svg class="ic" style="left:655px;top:180px;" width="7" height="6" viewBox="0 0 7 6"><path d="M0 0.6H7M0 2.4H7M0 4.2H7M0 5.8H7" stroke="#a2a2a2" stroke-width="0.8"/></svg>
<div style="left:486px;top:196px;width:14.5px;height:14px;background:#3f3f3f;border:1px solid #646464;"></div>
<svg class="ic" style="left:489px;top:199.5px;" width="9" height="7" viewBox="0 0 9 7"><rect x="0" y="0" width="9" height="7" fill="#e6e6e6"/><path d="M0.8 6.2L3.4 2.6L5.2 4.8L6.4 3.6L8.2 6.2Z" fill="#3f3f3f"/><circle cx="6.6" cy="1.9" r="0.8" fill="#3f3f3f"/></svg>
<div class="pt" style="left:505px;top:199.5px;letter-spacing:-0.45px;">像素图层属性</div>
<div style="left:479.5px;top:213px;width:186px;height:1px;background:#464646;"></div>
<div style="left:655px;top:214px;width:10.5px;height:103px;background:#5a5a5a;"></div>
<!-- W/H/X/Y -->
<div class="pt" style="left:486px;top:224px;font-size:7.6px;color:#cfcfcf;">W:</div>
<div style="left:499.5px;top:220.5px;width:39.5px;height:13.5px;background:#454545;border:1px solid #6a6a6a;"></div>
<div class="pt" style="left:501.5px;top:223.5px;font-size:8px;letter-spacing:-0.2px;">70.54 厘米</div>
<div style="left:545px;top:219px;width:15.5px;height:16.5px;background:#3a3a3a;border-radius:1px;"></div>
<svg class="ic" style="left:548.5px;top:225px;" width="9" height="5" viewBox="0 0 9 5"><rect x="0.5" y="0.5" width="4.4" height="4" rx="2" fill="none" stroke="#c8c8c8" stroke-width="0.9"/><rect x="4.1" y="0.5" width="4.4" height="4" rx="2" fill="none" stroke="#c8c8c8" stroke-width="0.9"/></svg>
<div class="pt" style="left:569px;top:224px;font-size:7.6px;color:#cfcfcf;">H:</div>
<div style="left:580px;top:220.5px;width:39px;height:13.5px;background:#454545;border:1px solid #6a6a6a;overflow:hidden;"><div class="pt" style="left:1px;top:2px;font-size:8px;letter-spacing:-0.2px;">105.83 厘米</div></div>
<div class="pt" style="left:488.5px;top:243.5px;font-size:7.6px;color:#cfcfcf;">X:</div>
<div style="left:499.5px;top:240px;width:39.5px;height:13px;background:#454545;border:1px solid #6a6a6a;"></div>
<div class="pt" style="left:501.5px;top:243px;font-size:8px;">0 厘米</div>
<div class="pt" style="left:569.5px;top:243.5px;font-size:7.6px;color:#cfcfcf;">Y:</div>
<div style="left:580px;top:240px;width:39px;height:13px;background:#454545;border:1px solid #6a6a6a;"></div>
<div class="pt" style="left:582px;top:243px;font-size:8px;">0 厘米</div>
<!-- divider -->
<div style="left:479.5px;top:333px;width:186px;height:3px;background:#3a3a3a;"></div>
<!-- Layers panel -->
<div style="left:479.5px;top:336px;width:186px;height:17.5px;background:#424242;"></div>
<div style="left:479.5px;top:336px;width:28.5px;height:17.5px;background:#535353;"></div>
<div class="pt" style="left:485.5px;top:340.5px;font-weight:bold;color:#f4f4f4;">图层</div>
<div class="pt dim" style="left:513.5px;top:340.5px;">通道</div>
<div class="pt dim" style="left:542.5px;top:340.5px;">路径</div>
<svg class="ic" style="left:655px;top:342px;" width="7" height="6" viewBox="0 0 7 6"><path d="M0 0.6H7M0 2.4H7M0 4.2H7M0 5.8H7" stroke="#a2a2a2" stroke-width="0.8"/></svg>
<!-- filter row -->
<div style="left:482px;top:360px;width:56.5px;height:14px;background:#454545;border:1px solid #6a6a6a;"></div>
<svg class="ic" style="left:485.5px;top:363.5px;" width="7" height="7" viewBox="0 0 7 7"><circle cx="4.2" cy="2.8" r="2.1" stroke="#e0e0e0" stroke-width="0.9" fill="none"/><path d="M2.7 4.4L0.6 6.5" stroke="#e0e0e0" stroke-width="1.1"/></svg>
<div class="pt" style="left:494.5px;top:363px;">类型</div>
<svg class="ic" style="left:529.5px;top:365.5px;" width="6" height="4" viewBox="0 0 6 4"><path d="M0.5 0.5L3 3L5.5 0.5" stroke="#d0d0d0" stroke-width="1" fill="none"/></svg>
<svg class="ic" style="left:548.5px;top:362.5px;" width="9" height="8" viewBox="0 0 9 8"><rect x="0.5" y="0.5" width="8" height="7" rx="0.8" fill="#e0e0e0"/><path d="M1.6 6.2L3.6 3.4L5 5L5.8 4.2L7.4 6.2Z" fill="#535353"/><rect x="1.4" y="1.4" width="6.2" height="5.2" fill="none" stroke="#535353" stroke-width="0.5"/></svg>
<svg class="ic" style="left:564.5px;top:362.5px;" width="9" height="9" viewBox="0 0 9 9"><circle cx="4.5" cy="4.5" r="3.7" fill="none" stroke="#e0e0e0" stroke-width="1"/><path d="M4.5 0.8A3.7 3.7 0 0 0 4.5 8.2Z" fill="#e0e0e0" transform="rotate(45 4.5 4.5)"/></svg>
<div class="t" style="left:581.3px;top:362.6px;font-family:'Liberation Serif',serif;font-weight:bold;font-size:9.5px;color:#e0e0e0;">T</div>
<svg class="ic" style="left:595.5px;top:362.5px;" width="9" height="9" viewBox="0 0 9 9"><rect x="1.5" y="1.5" width="6" height="6" fill="none" stroke="#e0e0e0" stroke-width="1"/><rect x="0" y="0" width="2.4" height="2.4" fill="#e0e0e0"/><rect x="6.6" y="0" width="2.4" height="2.4" fill="#e0e0e0"/><rect x="0" y="6.6" width="2.4" height="2.4" fill="#e0e0e0"/><rect x="6.6" y="6.6" width="2.4" height="2.4" fill="#e0e0e0"/></svg>
<svg class="ic" style="left:611.5px;top:362px;" width="9" height="10" viewBox="0 0 9 10"><path d="M0.5 0.5H5L7 2.5V9.5H0.5Z" fill="#e0e0e0"/><rect x="4.4" y="5" width="4.2" height="3.6" fill="#535353" stroke="#e0e0e0" stroke-width="0.7"/><path d="M5.4 5V4.2A1.1 1.1 0 0 1 7.6 4.2V5" fill="none" stroke="#535353" stroke-width="0.8"/></svg>
<div style="left:631.8px;top:361px;width:5.4px;height:11.6px;background:#3f3f3f;border-radius:2.7px;"></div>
<div style="left:631.8px;top:360.4px;width:5.4px;height:5.4px;background:#dcdcdc;border-radius:50%;"></div>
<div style="left:479.5px;top:376px;width:186px;height:1px;background:#464646;"></div>
<!-- blend row -->
<div style="left:482px;top:379px;width:76.5px;height:13.5px;background:#454545;border:1px solid #6a6a6a;"></div>
<div class="pt" style="left:487.5px;top:382px;">正常</div>
<svg class="ic" style="left:549.5px;top:384px;" width="6" height="4" viewBox="0 0 6 4"><path d="M0.5 0.5L3 3L5.5 0.5" stroke="#d0d0d0" stroke-width="1" fill="none"/></svg>
<div class="pt" style="left:563.5px;top:382px;letter-spacing:-0.35px;">不透明度:</div>
<div style="left:600.5px;top:379px;width:25px;height:13.5px;background:#454545;border:1px solid #6a6a6a;"></div>
<div class="pt" style="left:603px;top:382px;font-size:8px;letter-spacing:-0.3px;">100%</div>
<div style="left:627.5px;top:379px;width:10px;height:13.5px;background:#4a4a4a;border:1px solid #6a6a6a;"></div>
<svg class="ic" style="left:629.5px;top:384px;" width="6" height="4" viewBox="0 0 6 4"><path d="M0.5 0.5L3 3L5.5 0.5" stroke="#d0d0d0" stroke-width="1" fill="none"/></svg>
<!-- lock row -->
<div class="pt" style="left:483px;top:398px;letter-spacing:-0.2px;">锁定:</div>
<svg class="ic" style="left:507.5px;top:398.5px;" width="8" height="8" viewBox="0 0 8 8"><rect x="0.4" y="0.4" width="7.2" height="7.2" fill="none" stroke="#e0e0e0" stroke-width="0.8"/><path d="M1.6 1.6h1.6v1.6h-1.6zM4.8 1.6h1.6v1.6h-1.6zM3.2 3.2h1.6v1.6h-1.6zM1.6 4.8h1.6v1.6h-1.6zM4.8 4.8h1.6v1.6h-1.6z" fill="#e0e0e0"/></svg>
<svg class="ic" style="left:521px;top:398px;" width="9" height="9" viewBox="0 0 9 9"><path d="M8.4 0.4C8.9 0.7 8.8 1.3 8.4 1.8L4.8 5.8L3.6 4.8Z" fill="#e0e0e0"/><path d="M3.1 5.3L4.3 6.4C4.1 7.8 2.8 8.8 0.4 8.6C1.4 7.9 1.4 7.2 1.7 6.4C2 5.7 2.5 5.3 3.1 5.3Z" fill="#e0e0e0"/></svg>
<svg class="ic" style="left:536px;top:398px;" width="9" height="9" viewBox="0 0 9 9"><path d="M4.5 0L6 1.8H5V4H7.2V3L9 4.5L7.2 6V5H5V7.2H6L4.5 9L3 7.2H4V5H1.8V6L0 4.5L1.8 3V4H4V1.8H3Z" fill="#e0e0e0"/></svg>
<svg class="ic" style="left:550px;top:398px;" width="10" height="9" viewBox="0 0 10 9"><path d="M2.4 0.2V7H9.6M0.2 2.2H7.4V8.8" fill="none" stroke="#e0e0e0" stroke-width="0.9"/><path d="M3.6 5.6L6.2 3.2" stroke="#e0e0e0" stroke-width="0.8"/></svg>
<svg class="ic" style="left:566px;top:397.5px;" width="8" height="10" viewBox="0 0 8 10"><rect x="0.4" y="4.2" width="7.2" height="5.4" rx="0.6" fill="#e0e0e0"/><path d="M1.9 4.2V2.8A2.1 2.1 0 0 1 6.1 2.8V4.2" fill="none" stroke="#e0e0e0" stroke-width="1.1"/></svg>
<div class="pt" style="left:580px;top:398px;letter-spacing:-0.2px;">填充:</div>
<div style="left:600.5px;top:395.5px;width:25px;height:13.5px;background:#454545;border:1px solid #6a6a6a;"></div>
<div class="pt" style="left:603px;top:398.5px;font-size:8px;letter-spacing:-0.3px;">100%</div>
<div style="left:627.5px;top:395.5px;width:10px;height:13.5px;background:#4a4a4a;border:1px solid #6a6a6a;"></div>
<svg class="ic" style="left:629.5px;top:400.5px;" width="6" height="4" viewBox="0 0 6 4"><path d="M0.5 0.5L3 3L5.5 0.5" stroke="#d0d0d0" stroke-width="1" fill="none"/></svg>
<!-- layer list -->
<div style="left:479.5px;top:413px;width:175px;height:66.5px;background:#4a4a4a;"></div>
<div style="left:654.5px;top:413px;width:11px;height:66.5px;background:#4f4f4f;"></div>
<div style="left:479.5px;top:413.5px;width:175px;height:25.5px;background:#6b6b6b;"></div>
<svg class="ic" style="left:484.8px;top:424px;" width="8.4" height="6" viewBox="0 0 9 6"><path d="M0.2 3C2 0 7 0 8.8 3C7 6 2 6 0.2 3Z" fill="#ededed"/><circle cx="4.5" cy="3" r="1.5" fill="#4a4a4a"/></svg>
<!-- thumb -->
<div style="left:500px;top:413.8px;width:17px;height:24.4px;border:1.2px solid #f2f2f2;"></div>
<div style="left:504px;top:413.8px;width:9px;height:24.4px;background:#6b6b6b;"></div>
<div style="left:500px;top:418.5px;width:17px;height:15px;background:#6b6b6b;"></div>
<div style="left:501.4px;top:415.4px;width:14.4px;height:21.4px;background:#2a2a2a;"></div>
<svg style="left:502.4px;top:416.6px;" width="12.6" height="19.2" viewBox="0 0 105 155" preserveAspectRatio="none">
<rect width="105" height="155" fill="#eeeeee"/>
<path d="M8 22C8 6 38 0 48 18C52 30 50 42 44 46L20 52C12 48 8 36 8 22Z" fill="#4a2e1c"/>
<path d="M22 34C30 28 44 30 48 38C50 48 46 58 38 60C28 60 22 50 22 34Z" fill="#efc4a2"/>
<path d="M14 62C24 56 40 58 50 64L66 92C80 84 96 88 100 100L100 150L70 152L60 120L30 140L10 130Z" fill="#e6b48c"/>
<path d="M10 82C22 76 36 80 40 96L38 122L8 130Z" fill="#c99ac2"/>
<path d="M8 126L40 112L52 140L28 150L8 146Z" fill="#f1ebe8"/>
</svg>
<div class="pt" style="left:521.5px;top:422.5px;">图层 1</div>
<!-- bottom icons -->
<svg class="ic" style="left:532.5px;top:484.5px;" width="10" height="5" viewBox="0 0 10 5"><rect x="0.5" y="0.5" width="5" height="4" rx="2" fill="none" stroke="#8a8a8a" stroke-width="0.9"/><rect x="4.5" y="0.5" width="5" height="4" rx="2" fill="none" stroke="#8a8a8a" stroke-width="0.9"/></svg>
<div class="t" style="left:551px;top:481px;font-family:'Liberation Serif',serif;font-style:italic;font-size:10.5px;color:#e4e4e4;">fx</div>
<svg class="ic" style="left:567.5px;top:482.5px;" width="10" height="8" viewBox="0 0 10 8"><rect x="0" y="0" width="10" height="8" fill="#e0e0e0"/><circle cx="5" cy="4" r="2.3" fill="#535353"/></svg>
<svg class="ic" style="left:586px;top:482.5px;" width="9" height="9" viewBox="0 0 9 9"><circle cx="4.5" cy="4.5" r="3.7" fill="none" stroke="#e0e0e0" stroke-width="1"/><path d="M4.5 0.8A3.7 3.7 0 0 0 4.5 8.2Z" fill="#e0e0e0" transform="rotate(45 4.5 4.5)"/></svg>
<svg class="ic" style="left:603.5px;top:482.5px;" width="10" height="8" viewBox="0 0 10 8"><path d="M0 0.6H3.8L4.8 1.8H10V8H0Z" fill="#e0e0e0"/></svg>
<svg class="ic" style="left:621px;top:482.5px;" width="9" height="9" viewBox="0 0 9 9"><path d="M0.6 0.6H8.4V8.4H3.4L0.6 5.6Z" fill="none" stroke="#e0e0e0" stroke-width="1.1"/><path d="M0.6 5.6H3.4V8.4Z" fill="#e0e0e0"/></svg>
<svg class="ic" style="left:639px;top:482px;" width="8" height="10" viewBox="0 0 8 10"><path d="M0.2 1.8H7.8M2.8 1.8V0.6H5.2V1.8" fill="none" stroke="#8a8a8a" stroke-width="0.9"/><path d="M1 2.8H7L6.5 9.6H1.5Z" fill="#8a8a8a"/></svg>
<div style="left:452.5px;top:495px;width:268px;height:1.5px;background:#3a3a3a;"></div>

<!-- RIGHT STRIP -->
<div style="left:716.5px;top:52px;width:3.5px;height:447px;background:#3e3e3e;"></div>
<svg class="ic" style="left:707.8px;top:46.2px;" width="5" height="3" viewBox="0 0 5 3"><path d="M2.4 0V3L0 1.5ZM5 0V3L2.6 1.5Z" fill="#e0e0e0"/></svg>
<div style="left:685px;top:54.5px;width:13px;height:1px;background:#444;"></div>
<div style="left:667px;top:77.5px;width:49.5px;height:2px;background:#3c3c3c;"></div>
<div style="left:685px;top:82px;width:13px;height:1px;background:#444;"></div>
<div style="left:667px;top:104px;width:49.5px;height:2px;background:#3c3c3c;"></div>
<svg class="ic" style="left:674.5px;top:60.5px;" width="10" height="14" viewBox="0 0 10 14"><path d="M3.2 9.6C3.2 8 0.8 7 0.8 4.6A4.2 4.2 0 0 1 9.2 4.6C9.2 7 6.8 8 6.8 9.6Z" fill="none" stroke="#e4e4e4" stroke-width="1"/><path d="M3.4 10.6H6.6V12L5.8 13H4.2L3.4 12Z" fill="#e4e4e4"/></svg>
<div class="pt" style="left:691.5px;top:63.5px;">学习</div>
<svg class="ic" style="left:672px;top:89px;" width="15" height="10" viewBox="0 0 15 10"><path d="M4.6 9.4A4.2 4.2 0 0 1 4 1.2C6 0.4 8 1.4 9 3C11.8 1.8 14.4 3.8 14.4 6.2C14.4 8.2 12.8 9.4 11 9.4Z" fill="none" stroke="#e4e4e4" stroke-width="1"/><path d="M5 7.6A2.4 2.4 0 0 1 5 2.8C6.6 2.8 7.4 4 8.4 5.4C9.2 6.6 10 7.6 11 7.6A1.7 1.7 0 0 0 11 4.2C10.2 4.2 9.6 4.8 9.2 5.4" fill="none" stroke="#e4e4e4" stroke-width="0.9"/></svg>
<div class="pt" style="left:691.5px;top:90px;">库</div>
<div id="menu">
<div class="i" style="top:2.00px;">新建<span class="l">(N)...</span></div>
<div class="s" style="top:2.00px;">Ctrl+N</div>
<div class="i" style="top:15.78px;">打开<span class="l">(O)...</span></div>
<div class="s" style="top:15.78px;">Ctrl+O</div>
<div class="i" style="top:29.56px;">在 <span class="l">Bridge</span> 中浏览<span class="l">(B)...</span></div>
<div class="s" style="top:29.56px;">Alt+Ctrl+O</div>
<div class="i" style="top:43.34px;">打开为<span class="l">...</span></div>
<div class="s" style="top:43.34px;">Alt+Shift+Ctrl+O</div>
<div class="i" style="top:57.12px;">打开为智能对象<span class="l">...</span></div>
<div class="i" style="top:70.90px;">最近打开文件<span class="l">(T)</span></div>
<div class="ar" style="top:72.10px;"></div>
<div class="sep" style="top:86.24px;"></div>
<div class="i" style="top:91.78px;">关闭<span class="l">(C)</span></div>
<div class="s" style="top:91.78px;">Ctrl+W</div>
<div class="i" style="top:105.56px;">关闭全部</div>
<div class="s" style="top:105.56px;">Alt+Ctrl+W</div>
<div class="i" style="top:119.34px;">关闭并转到 <span class="l">Bridge...</span></div>
<div class="s" style="top:119.34px;">Shift+Ctrl+W</div>
<div class="i dis" style="top:133.12px;">存储<span class="l">(S)</span></div>
<div class="s dis" style="top:133.12px;">Ctrl+S</div>
<div style="left:0;top:144.70px;width:154px;height:15.2px;background:#0078d7;"></div>
<div class="i" style="top:146.90px;color:#fff;">存储为<span class="l">(A)...</span></div>
<div class="s" style="top:146.90px;color:#fff;">Shift+Ctrl+S</div>
<div class="i dis" style="top:160.68px;">恢复<span class="l">(V)</span></div>
<div class="s dis" style="top:160.68px;">F12</div>
<div class="sep" style="top:176.02px;"></div>
<div class="i" style="top:181.56px;">导出<span class="l">(E)</span></div>
<div class="ar" style="top:182.76px;"></div>
<div class="i" style="top:195.34px;">生成</div>
<div class="ar" style="top:196.54px;"></div>
<div class="i" style="top:209.12px;">共享<span class="l">...</span></div>
<div class="i" style="top:222.90px;">在 <span class="l">Behance</span> 上共享<span class="l">(D)...</span></div>
<div class="sep" style="top:238.24px;"></div>
<div class="i" style="top:243.78px;">搜索 <span class="l">Adobe Stock...</span></div>
<div class="i" style="top:257.56px;">置入嵌入对象<span class="l">(L)...</span></div>
<div class="i" style="top:271.34px;">置入链接的智能对象<span class="l">(K)...</span></div>
<div class="i dis" style="top:285.12px;">打包<span class="l">(G)...</span></div>
<div class="sep" style="top:300.46px;"></div>
<div class="i" style="top:306.00px;">自动<span class="l">(U)</span></div>
<div class="ar" style="top:307.20px;"></div>
<div class="i" style="top:319.78px;">脚本<span class="l">(R)</span></div>
<div class="ar" style="top:320.98px;"></div>
<div class="i" style="top:333.56px;">导入<span class="l">(M)</span></div>
<div class="ar" style="top:334.76px;"></div>
<div class="sep" style="top:348.90px;"></div>
<div class="i" style="top:354.44px;">文件简介<span class="l">(F)...</span></div>
<div class="s" style="top:354.44px;">Alt+Shift+Ctrl+I</div>
<div class="sep" style="top:369.78px;"></div>
<div class="i" style="top:375.32px;">打印<span class="l">(P)...</span></div>
<div class="s" style="top:375.32px;">Ctrl+P</div>
<div class="i" style="top:389.10px;">打印一份<span class="l">(Y)</span></div>
<div class="s" style="top:389.10px;">Alt+Shift+Ctrl+P</div>
<div class="sep" style="top:404.44px;"></div>
<div class="i" style="top:409.98px;">退出<span class="l">(X)</span></div>
<div class="s" style="top:409.98px;">Ctrl+Q</div>
</div>
<div style="left:24.5px;top:-2.2px;width:44.5px;height:27.8px;border:3.2px solid #e8121d;"></div>
<div style="left:27px;top:159.5px;width:159px;height:22.5px;border:3.2px solid #e8121d;"></div>
</body>
</html>
